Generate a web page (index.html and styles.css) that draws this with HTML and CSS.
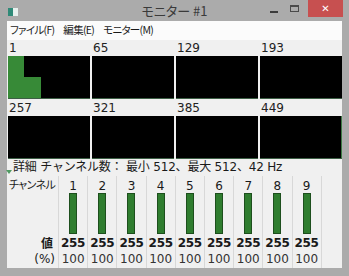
FILE: index.html
```html
<!DOCTYPE html>
<html lang="ja">
<head>
<meta charset="utf-8">
<link rel="stylesheet" href="styles.css">
</head>
<body>
<div class="window">
  <div class="titlebar">
    <div class="tb-left"><span class="app-icon"><span class="app-icon-l"></span><span class="app-icon-r"></span></span></div>
    <div class="title">モニター #1</div>
    <div class="controls">
      <span class="btn-min"><span class="min-line"></span></span>
      <span class="btn-max"><span class="max-box"></span></span>
      <span class="btn-close">✕</span>
    </div>
  </div>
  <div class="client">
    <div class="menubar">
      <span class="menu-item">ファイル(F)</span>
      <span class="menu-item">編集(E)</span>
      <span class="menu-item">モニター(M)</span>
    </div>
    <div class="content">
      <div class="universes">
        <div class="uni"><div class="uni-label">1</div><div class="uni-panel"><span class="fill fill-a"></span><span class="fill fill-b"></span></div></div>
        <div class="uni"><div class="uni-label">65</div><div class="uni-panel"></div></div>
        <div class="uni"><div class="uni-label">129</div><div class="uni-panel"></div></div>
        <div class="uni"><div class="uni-label">193</div><div class="uni-panel"></div></div>
        <div class="uni"><div class="uni-label">257</div><div class="uni-panel"></div></div>
        <div class="uni"><div class="uni-label">321</div><div class="uni-panel"></div></div>
        <div class="uni"><div class="uni-label">385</div><div class="uni-panel"></div></div>
        <div class="uni"><div class="uni-label">449</div><div class="uni-panel uni-panel-last"></div></div>
      </div>
      <div class="details"><span class="expander"></span><span class="details-text">詳細 チャンネル数： 最小 512、最大 512、42 Hz</span></div>
      <div class="channels">
        <div class="lbl lbl-head">チャンネル</div>
        <div class="col col-head">1</div><div class="col col-head">2</div><div class="col col-head">3</div><div class="col col-head">4</div><div class="col col-head">5</div><div class="col col-head">6</div><div class="col col-head">7</div><div class="col col-head">8</div><div class="col col-head">9</div>
        <div class="lbl lbl-bar"></div>
        <div class="col col-bar"><span class="bar"></span></div><div class="col col-bar"><span class="bar"></span></div><div class="col col-bar"><span class="bar"></span></div><div class="col col-bar"><span class="bar"></span></div><div class="col col-bar"><span class="bar"></span></div><div class="col col-bar"><span class="bar"></span></div><div class="col col-bar"><span class="bar"></span></div><div class="col col-bar"><span class="bar"></span></div><div class="col col-bar"><span class="bar"></span></div>
        <div class="lbl lbl-val">値</div>
        <div class="col col-val">255</div><div class="col col-val">255</div><div class="col col-val">255</div><div class="col col-val">255</div><div class="col col-val">255</div><div class="col col-val">255</div><div class="col col-val">255</div><div class="col col-val">255</div><div class="col col-val">255</div>
        <div class="lbl lbl-pct">(%)</div>
        <div class="col col-pct">100</div><div class="col col-pct">100</div><div class="col col-pct">100</div><div class="col col-pct">100</div><div class="col col-pct">100</div><div class="col col-pct">100</div><div class="col col-pct">100</div><div class="col col-pct">100</div><div class="col col-pct">100</div>
      </div>
    </div>
  </div>
</div>
</body>
</html>
```

FILE: styles.css
```css
* { box-sizing: border-box; }
html, body { margin: 0; padding: 0; }
body {
  width: 349px;
  height: 276px;
  overflow: hidden;
  font-family: "DejaVu Sans", "Noto Sans CJK JP", sans-serif;
  color: #1a1a1a;
}
.window {
  width: 349px;
  height: 276px;
  background: #ababab;
  display: flex;
  flex-direction: column;
}
.titlebar {
  height: 22px;
  display: grid;
  grid-template-columns: 1fr auto 1fr;
  align-items: start;
}
.tb-left { padding: 8px 0 0 8px; }
.app-icon { display: flex; width: 10px; height: 8px; }
.app-icon-l { width: 5px; background: #2f8a78; }
.app-icon-r { width: 5px; background: #e8f0ee; }
.title {
  font-family: "Noto Sans CJK JP", sans-serif;
  font-feature-settings: "palt";
  font-size: 13px;
  line-height: 20px;
  color: #3a3a3a;
  padding-top: 1px;
}
.controls {
  display: flex;
  justify-content: flex-end;
  align-items: flex-start;
  padding-right: 6px;
}
.btn-min { width: 20px; height: 17px; display: flex; justify-content: center; padding-top: 11px; }
.min-line { width: 8px; height: 2px; background: #3c3c3c; }
.btn-max { width: 20px; height: 17px; display: flex; justify-content: center; padding-top: 5px; margin-right: 4px; }
.max-box { width: 9px; height: 7px; border: 1px solid #4a4a4a; border-top-width: 2px; }
.btn-close {
  width: 35px;
  height: 17px;
  background: #c75050;
  color: #ffffff;
  font-size: 10px;
  font-weight: bold;
  line-height: 17px;
  text-align: center;
}
.client {
  flex: 1;
  margin: 0 7px 8px 7px;
  background: #f0f0f0;
  display: flex;
  flex-direction: column;
}
.menubar {
  height: 19px;
  background: #fbfbfb;
  display: flex;
  gap: 9px;
  padding-left: 3px;
  font-family: "Noto Sans CJK JP", sans-serif;
  font-feature-settings: "palt";
  font-size: 10.5px;
  letter-spacing: -0.7px;
  line-height: 18px;
}
.content {
  flex: 1;
  display: flex;
  flex-direction: column;
  padding-left: 1px;
}
.universes {
  display: grid;
  grid-template-columns: repeat(4, 1fr);
  column-gap: 2px;
  row-gap: 1px;
}
.uni-label {
  height: 16px;
  font-size: 12px;
  line-height: 16px;
  padding-left: 1px;
  color: #222;
}
.uni-panel {
  height: 43px;
  background: #000;
  border-bottom: 1px solid #3d5f45;
  display: flex;
  align-items: flex-end;
}
.uni-panel-last { border-right: 1px solid #3d7a45; }
.fill { background: #378a37; display: block; }
.fill-a { width: 16px; height: 100%; }
.fill-b { width: 17px; height: 50%; }
.details {
  height: 17px;
  display: flex;
  align-items: center;
  font-family: "DejaVu Sans", "Noto Sans CJK JP", sans-serif;
  font-size: 12px;
  line-height: 17px;
  white-space: nowrap;
}
.details-text { letter-spacing: -0.2px; }
.expander {
  width: 0; height: 0;
  border-left: 3px solid transparent;
  border-right: 3px solid transparent;
  border-top: 4px solid #4f9a62;
  margin: 8px 1px 0 -2px;
}
.channels {
  display: grid;
  grid-template-columns: 51px repeat(9, 29.2px) 1fr;
  grid-template-rows: 17px 42px 16px 17px;
}
.lbl {
  font-size: 12px;
  border-right: 1px solid #d8d8d8;
  grid-column: 1;
  white-space: nowrap;
}
.lbl-head {
  font-family: "Noto Sans CJK JP", sans-serif;
  font-feature-settings: "palt";
  font-size: 11px;
  letter-spacing: -0.6px;
  padding-left: 1px;
  line-height: 16px;
}
.lbl-val { font-family: "Noto Sans CJK JP", sans-serif; font-weight: bold; text-align: right; padding-right: 5px; line-height: 16px; }
.lbl-pct { text-align: right; padding-right: 3px; line-height: 17px; }
.col {
  border-right: 1px solid #d8d8d8;
  text-align: center;
  font-size: 12px;
}
.col-head { line-height: 21px; }
.col-bar { display: flex; justify-content: center; align-items: stretch; padding-bottom: 1px; }
.bar { width: 8px; background: #2f7d2f; border: 1px solid #1d4f1d; }
.col-val { font-weight: bold; font-size: 12px; line-height: 16px; letter-spacing: -0.3px; }
.col-pct { line-height: 17px; color: #333; }
```
